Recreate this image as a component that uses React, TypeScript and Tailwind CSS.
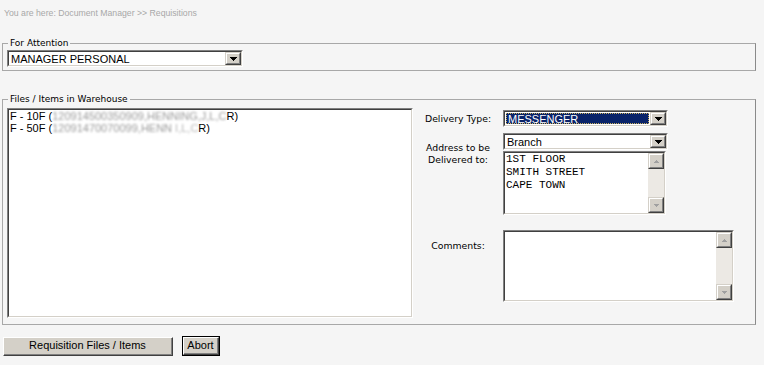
import React from "react";

const dv = "font-['DejaVu_Sans',Verdana,sans-serif]";
const ar = "font-['Liberation_Sans',Arial,sans-serif]";
const mono = "font-['Liberation_Mono','Courier_New',monospace]";

function Inset({ className, children }: { className: string; children?: React.ReactNode }) {
  return (
    <div className={`border border-t-[#808080] border-l-[#808080] border-b-white border-r-white ${className}`}>
      <div className="flex h-full w-full border border-t-[#404040] border-l-[#404040] border-b-[#d4d0c8] border-r-[#d4d0c8] bg-white">
        {children}
      </div>
    </div>
  );
}

function Raised({ className, children }: { className: string; children?: React.ReactNode }) {
  return (
    <div className={`border border-t-[#d4d0c8] border-l-[#d4d0c8] border-b-[#404040] border-r-[#404040] ${className}`}>
      <div className="flex h-full w-full items-center justify-center border border-t-white border-l-white border-b-[#808080] border-r-[#808080] bg-[#d4d0c8]">
        {children}
      </div>
    </div>
  );
}

function DownTri() {
  return (
    <svg width="7" height="4" viewBox="0 0 7 4" shapeRendering="crispEdges">
      <path d="M0 0h7v1h-7zM1 1h5v1h-5zM2 2h3v1h-3zM3 3h1v1h-1z" fill="#000" />
    </svg>
  );
}

function SmallTri({ up }: { up: boolean }) {
  return (
    <svg width="5" height="3" viewBox="0 0 5 3" shapeRendering="crispEdges">
      {up ? (
        <path d="M2 0h1v1h-1zM1 1h3v1h-3zM0 2h5v1h-5z" fill="#a0a0a0" />
      ) : (
        <path d="M0 0h5v1h-5zM1 1h3v1h-3zM2 2h1v1h-1z" fill="#a0a0a0" />
      )}
    </svg>
  );
}

function Select({ className, value, selected }: { className: string; value: string; selected?: boolean }) {
  return (
    <Inset className={className}>
      <div className={`flex flex-1 items-center ${selected ? "p-px" : "pl-[2px]"}`}>
        {selected ? (
          <div className="flex h-full w-full items-center border border-dotted border-[#c8b060] bg-[#0a246a] pl-px">
            <span className={`${ar} text-[11px] leading-[12px] text-white`}>{value}</span>
          </div>
        ) : (
          <span className={`${ar} text-[11px] leading-[12px] text-black`}>{value}</span>
        )}
      </div>
      <Raised className="h-full w-[16px]">
        <DownTri />
      </Raised>
    </Inset>
  );
}

function TextArea({ className, lines }: { className: string; lines: string[] }) {
  return (
    <Inset className={className}>
      <div className={`${mono} flex-1 pl-px text-[11px] leading-[13px] text-black`}>
        {lines.map((l) => (
          <div key={l}>{l}</div>
        ))}
      </div>
      <div className="flex h-full w-[16px] flex-col bg-[#ece9e4]">
        <Raised className="h-[16px] w-[16px]">
          <SmallTri up />
        </Raised>
        <div className="flex-1" />
        <Raised className="h-[16px] w-[16px]">
          <SmallTri up={false} />
        </Raised>
      </div>
    </Inset>
  );
}

export default function App() {
  return (
    <div className="h-[365px] w-[764px] overflow-hidden bg-[#f5f5f5] pl-[2px] pt-[7px]">
      <div className={`${ar} pl-[2px] text-[8.7px] leading-[12px] text-[#a8a8a8]`}>
        You are here: Document Manager &gt;&gt; Requisitions
      </div>

      <fieldset className="mt-[18px] w-[754px] border border-[#a8a8a8] border-r-[#8a8a8a] px-[4px] pb-[3px] pt-[1px]">
        <legend className={`${dv} ml-px px-[2px] text-[9px] leading-[12px] text-black`}>For Attention</legend>
        <Select className="h-[17px] w-[236px]" value="MANAGER PERSONAL" />
      </fieldset>

      <fieldset className="mt-[22px] w-[754px] border border-[#a8a8a8] border-r-[#8a8a8a] px-[4px] pb-[6px] pt-[3px]">
        <legend className={`${dv} ml-px px-[2px] text-[9px] leading-[12px] text-black`}>Files / Items in Warehouse</legend>
        <div className="flex">
          <Inset className="h-[210px] w-[406px]">
            <div className={`${ar} flex-1 pl-px text-[11px] leading-[12px] text-black`}>
              <div className="whitespace-nowrap">
                F - 10F (<span className="text-[#9a9a9a] blur-[0.8px]">120914500350909,HENNING,J,L,C</span>R)
              </div>
              <div className="whitespace-nowrap">
                F - 50F (<span className="text-[#9a9a9a] blur-[0.8px]">12091470070099,HENN</span> <span className="text-[#b8b8b8] blur-[1px]">I,L,C</span>R)
              </div>
            </div>
          </Inset>

          <div className={`${dv} ml-[5px] flex flex-col pt-[2px] text-[9.3px] leading-[12px] text-black`}>
            <div className="flex items-center">
              <div className="w-[80px] text-center">Delivery Type:</div>
              <Select className="ml-[5px] h-[17px] w-[165px]" value="MESSENGER" selected />
            </div>
            <div className="mt-[6px] flex items-start">
              <div className="mt-[9px] w-[80px] text-center">
                Address to be
                <br />
                Delivered to:
              </div>
              <div className="ml-[5px] flex flex-col gap-px">
                <Select className="h-[17px] w-[165px]" value="Branch" />
                <TextArea className="h-[64px] w-[163px]" lines={["1ST FLOOR", "SMITH STREET", "CAPE TOWN"]} />
              </div>
            </div>
            <div className="mt-[15px] flex items-start">
              <div className="mt-[10px] w-[80px] text-center">Comments:</div>
              <TextArea className="ml-[5px] h-[72px] w-[231px]" lines={[]} />
            </div>
          </div>
        </div>
      </fieldset>

      <div className="mt-[11px] flex items-center pl-px">
        <div className="h-[19px] w-[170px] border border-t-white border-l-white border-b-[#404040] border-r-[#404040]">
          <div className={`${ar} flex h-full w-full items-center justify-center border-b border-r border-b-[#808080] border-r-[#808080] bg-[#d4d0c8] text-[11px] text-black`}>
            Requisition Files / Items
          </div>
        </div>
        <div className="ml-[9px] h-[20px] w-[38px] border border-black">
          <div className="h-full w-full border border-t-white border-l-white border-b-[#404040] border-r-[#404040]">
            <div className={`${ar} flex h-full w-full items-center justify-center border-b border-r border-b-[#808080] border-r-[#808080] bg-[#d4d0c8] text-[11px] text-black`}>
              Abort
            </div>
          </div>
        </div>
      </div>
    </div>
  );
}
